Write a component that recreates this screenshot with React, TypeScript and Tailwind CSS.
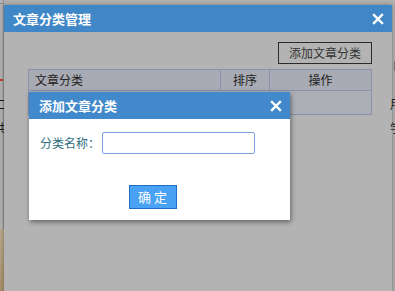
const cn = '"Noto Sans CJK SC", "Microsoft YaHei", sans-serif';

function CloseIcon({ className }: { className?: string }) {
  return (
    <svg viewBox="0 0 12 12" className={className} fill="none">
      <path d="M2 2 L10 10 M10 2 L2 10" stroke="white" strokeWidth="2.4" strokeLinecap="square" />
    </svg>
  );
}

export default function App() {
  return (
    <div
      className="relative h-[291px] w-[395px] overflow-hidden bg-[#b0b0b0] text-[#222]"
      style={{ fontFamily: cn }}
    >
      {/* page behind, dimmed */}
      <div className="absolute left-0 top-0 h-full w-[4px] border-r border-[#8f8f8f]">
        <div className="h-[4px] border-b border-[#8a8a8a]" />
        <div className="absolute left-[-6px] top-[98px] text-[12px] leading-none text-[#1a1a1a]">二</div>
        <div className="absolute left-[-6px] top-[122px] text-[12px] leading-none text-[#1a1a1a]">共</div>
        <div className="absolute left-0 top-[79px] h-[2px] w-[3px] bg-[#c0392b]" />
        <div className="absolute bottom-0 left-0 h-[62px] w-[4px] bg-gradient-to-b from-[#b9a98c] to-[#a8906a]" />
      </div>

      {/* outer dialog */}
      <div className="absolute left-[4px] top-[5px] flex h-[300px] w-[388px] flex-col bg-[#b3b3b3] shadow-[0_0_4px_rgba(0,0,0,0.35)]">
        <div className="flex h-[27px] shrink-0 items-center justify-between bg-[#3f87c6] pl-[9px] pr-[8px]">
          <span className="text-[13px] font-bold text-white">文章分类管理</span>
          <CloseIcon className="h-[12px] w-[12px]" />
        </div>
        <div className="flex flex-col pl-[24px] pr-[20px]">
          <div className="flex justify-end pt-[10px]">
            <div className="flex h-[22px] w-[94px] items-center justify-center border border-[#2b2b2b] text-[12px] text-[#333]">
              添加文章分类
            </div>
          </div>
          <div className="mt-[5px] border border-[#8a91aa] text-[12px]">
            <div className="grid h-[20px] grid-cols-[192px_49px_1fr] bg-[#a9abb4]">
              <div className="flex items-center border-r border-[#8a91aa] pl-[6px]">文章分类</div>
              <div className="flex items-center justify-center border-r border-[#8a91aa]">排序</div>
              <div className="flex items-center justify-center">操作</div>
            </div>
            <div className="h-[24px] border-t border-[#8a91aa] bg-[#adafb7]" />
          </div>
        </div>
        <div className="absolute right-[-3px] top-[56px] h-[10px] w-px bg-[#777]" />
      </div>
      <div className="absolute left-[390px] top-[98px] text-[12px] leading-none text-[#1a1a1a]">用</div>
      <div className="absolute left-[390px] top-[122px] text-[12px] leading-none text-[#1a1a1a]">学</div>

      {/* inner dialog */}
      <div className="absolute left-[29px] top-[92px] flex h-[128px] w-[261px] flex-col bg-white shadow-[1px_2px_5px_rgba(0,0,0,0.45)]">
        <div className="flex h-[27px] shrink-0 items-center justify-between bg-[#4189ca] pl-[10px] pr-[8px]">
          <span className="text-[13px] font-bold text-white">添加文章分类</span>
          <CloseIcon className="h-[12px] w-[12px]" />
        </div>
        <div className="flex items-center pl-[11px] pt-[13px]">
          <span className="w-[62px] text-[12px] text-[#2e6e7e]">分类名称：</span>
          <div className="h-[22px] w-[153px] rounded-[2px] border border-[#7fa0e0] bg-white" />
        </div>
        <div className="flex justify-center pr-[14px] pt-[31px]">
          <div className="flex h-[24px] w-[48px] items-center justify-center border border-[#1d6fc4] bg-[#49a2f4] text-[13px] text-white">
            确 定
          </div>
        </div>
      </div>
    </div>
  );
}
